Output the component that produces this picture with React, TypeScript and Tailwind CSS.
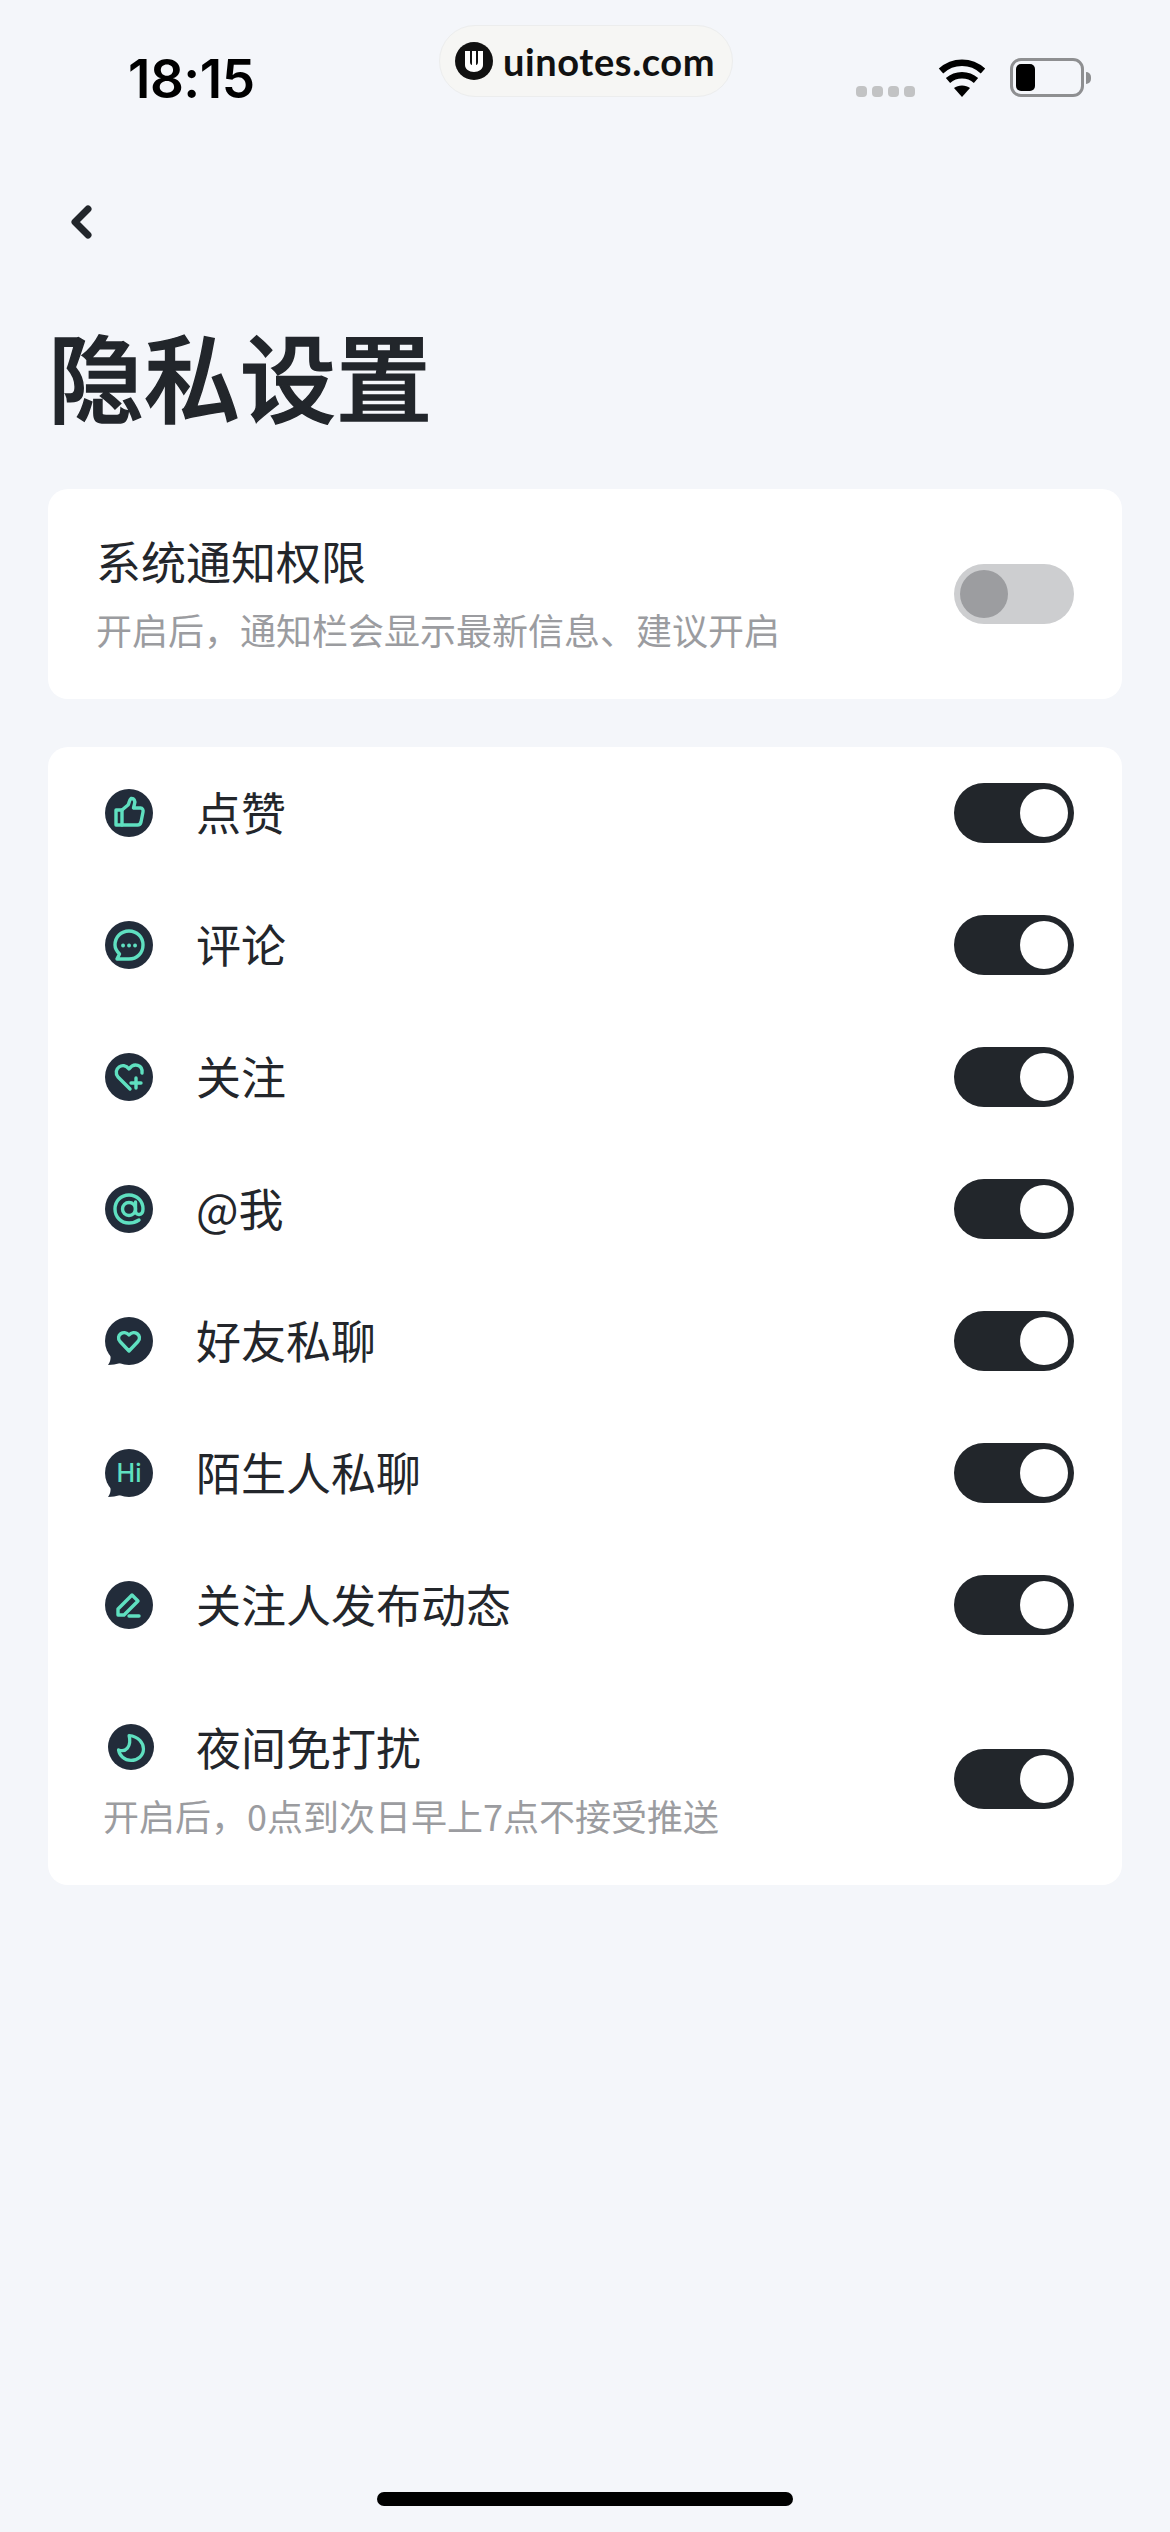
const FONT = "font-['Noto_Sans_CJK_SC','Noto_Sans',sans-serif]";

function Toggle({ on = true }: { on?: boolean }) {
  if (!on) {
    return (
      <div className="flex h-[60px] w-[120px] shrink-0 items-center rounded-full bg-[#cdced0] pl-[6px]">
        <div className="h-[48px] w-[48px] rounded-full bg-[#9c9da0]" />
      </div>
    );
  }
  return (
    <div className="flex h-[60px] w-[120px] shrink-0 items-center justify-end rounded-full bg-[#22262b] pr-[6px]">
      <div className="h-[48px] w-[48px] rounded-full bg-white" />
    </div>
  );
}

const MINT = "#5fe0c0";

function Badge({ children, tail = false, small = false }: { children: React.ReactNode; tail?: boolean; small?: boolean }) {
  return (
    <svg width={small ? 46 : 48} height={small ? 46 : 48} viewBox="0 0 48 48" className="shrink-0">
      <circle cx="24" cy="24" r="24" fill="#222c3a" />
      {tail && <path d="M3 48 C6 44 6 40 5 35 L16 46 C11 47 7 48 3 48Z" fill="#222c3a" />}
      <g fill="none" stroke={MINT} strokeWidth="3.400" strokeLinecap="round" strokeLinejoin="round">
        {children}
      </g>
    </svg>
  );
}

const icons: Record<string, React.ReactNode> = {
  like: (
    <Badge>
      <path d="M11 21h6v15h-6z" />
      <path d="M17 21l6-5c1.500-2 1-5 3-6.500 3-.5 4.500 2.500 3.500 5.500l-1 4h7c2 0 3 2 2.500 4l-2 10c-.5 2-1.500 3-3.500 3H17" />
    </Badge>
  ),
  comment: (
    <Badge>
      <path d="M24 10c8 0 14 6 14 14s-6 14-14 14H12l2.500-5C11.500 30 10 27.500 10 24c0-8 6-14 14-14z" />
      <path d="M18 24.500h.1M24 24.500h.1M30 24.500h.1" strokeWidth="3.800" />
    </Badge>
  ),
  follow: (
    <Badge>
      <path d="M25 36l-12-12c-6-8 5-16 11-8 5-7 14-4 13 4" />
      <path d="M31 25v10M26 30h10" />
    </Badge>
  ),
  at: (
    <Badge>
      <circle cx="24" cy="24" r="6.500" />
      <path d="M30.500 17v9c0 5 7.500 5 7.500-2 0-8-6-14-14-14s-14 6-14 14 6 14 14 14c4 0 7-1 10-3" />
    </Badge>
  ),
  friend: (
    <Badge tail>
      <path d="M24 34l-9-9.500c-5-6 4-12.500 9-6.500 5-6 14 .5 9 6.500z" />
    </Badge>
  ),
  hi: (
    <Badge tail>
      <text x="24" y="33" textAnchor="middle" fontSize="25" fontWeight="500" fontFamily="Inter, sans-serif" fill={MINT} stroke="none">
        Hi
      </text>
    </Badge>
  ),
  edit: (
    <Badge>
      <path d="M13 34v-6l14-14 6 6-14 14z" />
      <path d="M24 35h10" />
    </Badge>
  ),
  moon: (
    <Badge small>
      <path d="M22 12c10 1 15 8 15 14 0 7-6 12-13 12s-12-5-13-11c7 3 14-3 11-15z" />
    </Badge>
  ),
};

function Row({ icon, label }: { icon: string; label: string }) {
  return (
    <div className="flex h-[132px] items-center pl-[57px] pr-[48px]">
      {icons[icon]}
      <div className="ml-[43px] flex-1 pb-[3px] text-[45px] leading-[60px] text-[#23262b]">{label}</div>
      <Toggle />
    </div>
  );
}

export default function App() {
  return (
    <div className={`${FONT} flex min-h-[2532px] w-[1170px] flex-col bg-[#f4f6fa]`}>
      <div className="relative flex h-[130px] items-center justify-between pl-[128px] pr-[79px]">
        <div className="mt-[28px] font-['Inter',sans-serif] text-[53px] leading-[60px] font-semibold tracking-[-0.5px] text-black">18:15</div>
        <div className="absolute left-[439px] top-[25px] flex h-[72px] w-[294px] items-center rounded-[36px] border border-[#eceded] bg-[#f6f6f4] pl-[15px]">
          <svg width="38" height="38" viewBox="0 0 38 38" className="shrink-0">
            <circle cx="19" cy="19" r="19" fill="#111" />
            <path d="M10 9h5v11c0 2 1 3 2 3V9h4v14c1 0 2-1 2-3V9h5v14c0 4-4 7-9 7s-9-3-9-7z" fill="#fff" />
          </svg>
          <span className="ml-[10px] font-['Lato','Noto_Sans',sans-serif] text-[38px] leading-[44px] font-bold tracking-[0.6px] text-[#111]">uinotes.com</span>
        </div>
        <div className="mt-[25px] flex items-center">
          <div className="mt-[27px] flex gap-[5px]">
            <div className="h-[11px] w-[11px] rounded-[4px] bg-[#c2c3c4]" />
            <div className="h-[11px] w-[11px] rounded-[4px] bg-[#c2c3c4]" />
            <div className="h-[11px] w-[11px] rounded-[4px] bg-[#c2c3c4]" />
            <div className="h-[11px] w-[11px] rounded-[4px] bg-[#c2c3c4]" />
          </div>
          <svg width="50" height="38" viewBox="0 0 50 38" className="ml-[22px]">
            <path d="M25 38l-8-9c4-3.500 12-3.500 16 0z" fill="#000" />
            <path d="M11 21.500c8-7 20-7 28 0M4 12c12-11 30-11 42 0" fill="none" stroke="#000" strokeWidth="6.500" />
          </svg>
          <div className="ml-[23px] flex items-center">
            <div className="flex h-[39px] w-[74px] items-center rounded-[11px] border-[3px] border-[#8e8f91] pl-[3px]">
              <div className="h-[27px] w-[19px] rounded-[5px] bg-black" />
            </div>
            <div className="ml-[2px] h-[12px] w-[5px] rounded-r-full bg-[#8e8f91]" />
          </div>
        </div>
      </div>

      <div className="mt-[75px] pl-[68px]">
        <svg width="24" height="36" viewBox="0 0 24 36">
          <path d="M20 4L7 17l13 13" fill="none" stroke="#22262b" strokeWidth="7" strokeLinecap="round" strokeLinejoin="round" />
        </svg>
      </div>

      <div className="mt-[67px] pl-[48px] text-[96px] leading-[132px] font-medium text-[#22262b] [-webkit-text-stroke:1.5px_#22262b]">隐私设置</div>

      <div className="mx-[48px] mt-[49px] flex h-[210px] items-center justify-between rounded-[20px] bg-white pl-[48px] pr-[48px]">
        <div className="mb-[3px]">
          <div className="text-[45px] leading-[60px] text-[#23262b]">系统通知权限</div>
          <div className="mt-[13px] text-[36px] leading-[50px] text-[#9b9ca0]">开启后，通知栏会显示最新信息、建议开启</div>
        </div>
        <Toggle on={false} />
      </div>

      <div className="mx-[48px] mt-[48px] flex h-[1138px] flex-col rounded-[20px] bg-white">
        <Row icon="like" label="点赞" />
        <Row icon="comment" label="评论" />
        <Row icon="follow" label="关注" />
        <Row icon="at" label="@我" />
        <Row icon="friend" label="好友私聊" />
        <Row icon="hi" label="陌生人私聊" />
        <Row icon="edit" label="关注人发布动态" />
        <div className="mt-[46px] flex items-center justify-between pl-[55px] pr-[48px]">
          <div>
            <div className="flex items-center pl-[5px]">
              {icons.moon}
              <div className="ml-[42px] text-[45px] leading-[60px] text-[#23262b]">夜间免打扰</div>
            </div>
            <div className="mt-[13px] text-[36px] leading-[50px] text-[#9b9ca0]">开启后，0点到次日早上7点不接受推送</div>
          </div>
          <Toggle />
        </div>
      </div>

      <div className="mt-[607px] flex justify-center">
        <div className="h-[14px] w-[416px] rounded-full bg-black" />
      </div>
    </div>
  );
}
